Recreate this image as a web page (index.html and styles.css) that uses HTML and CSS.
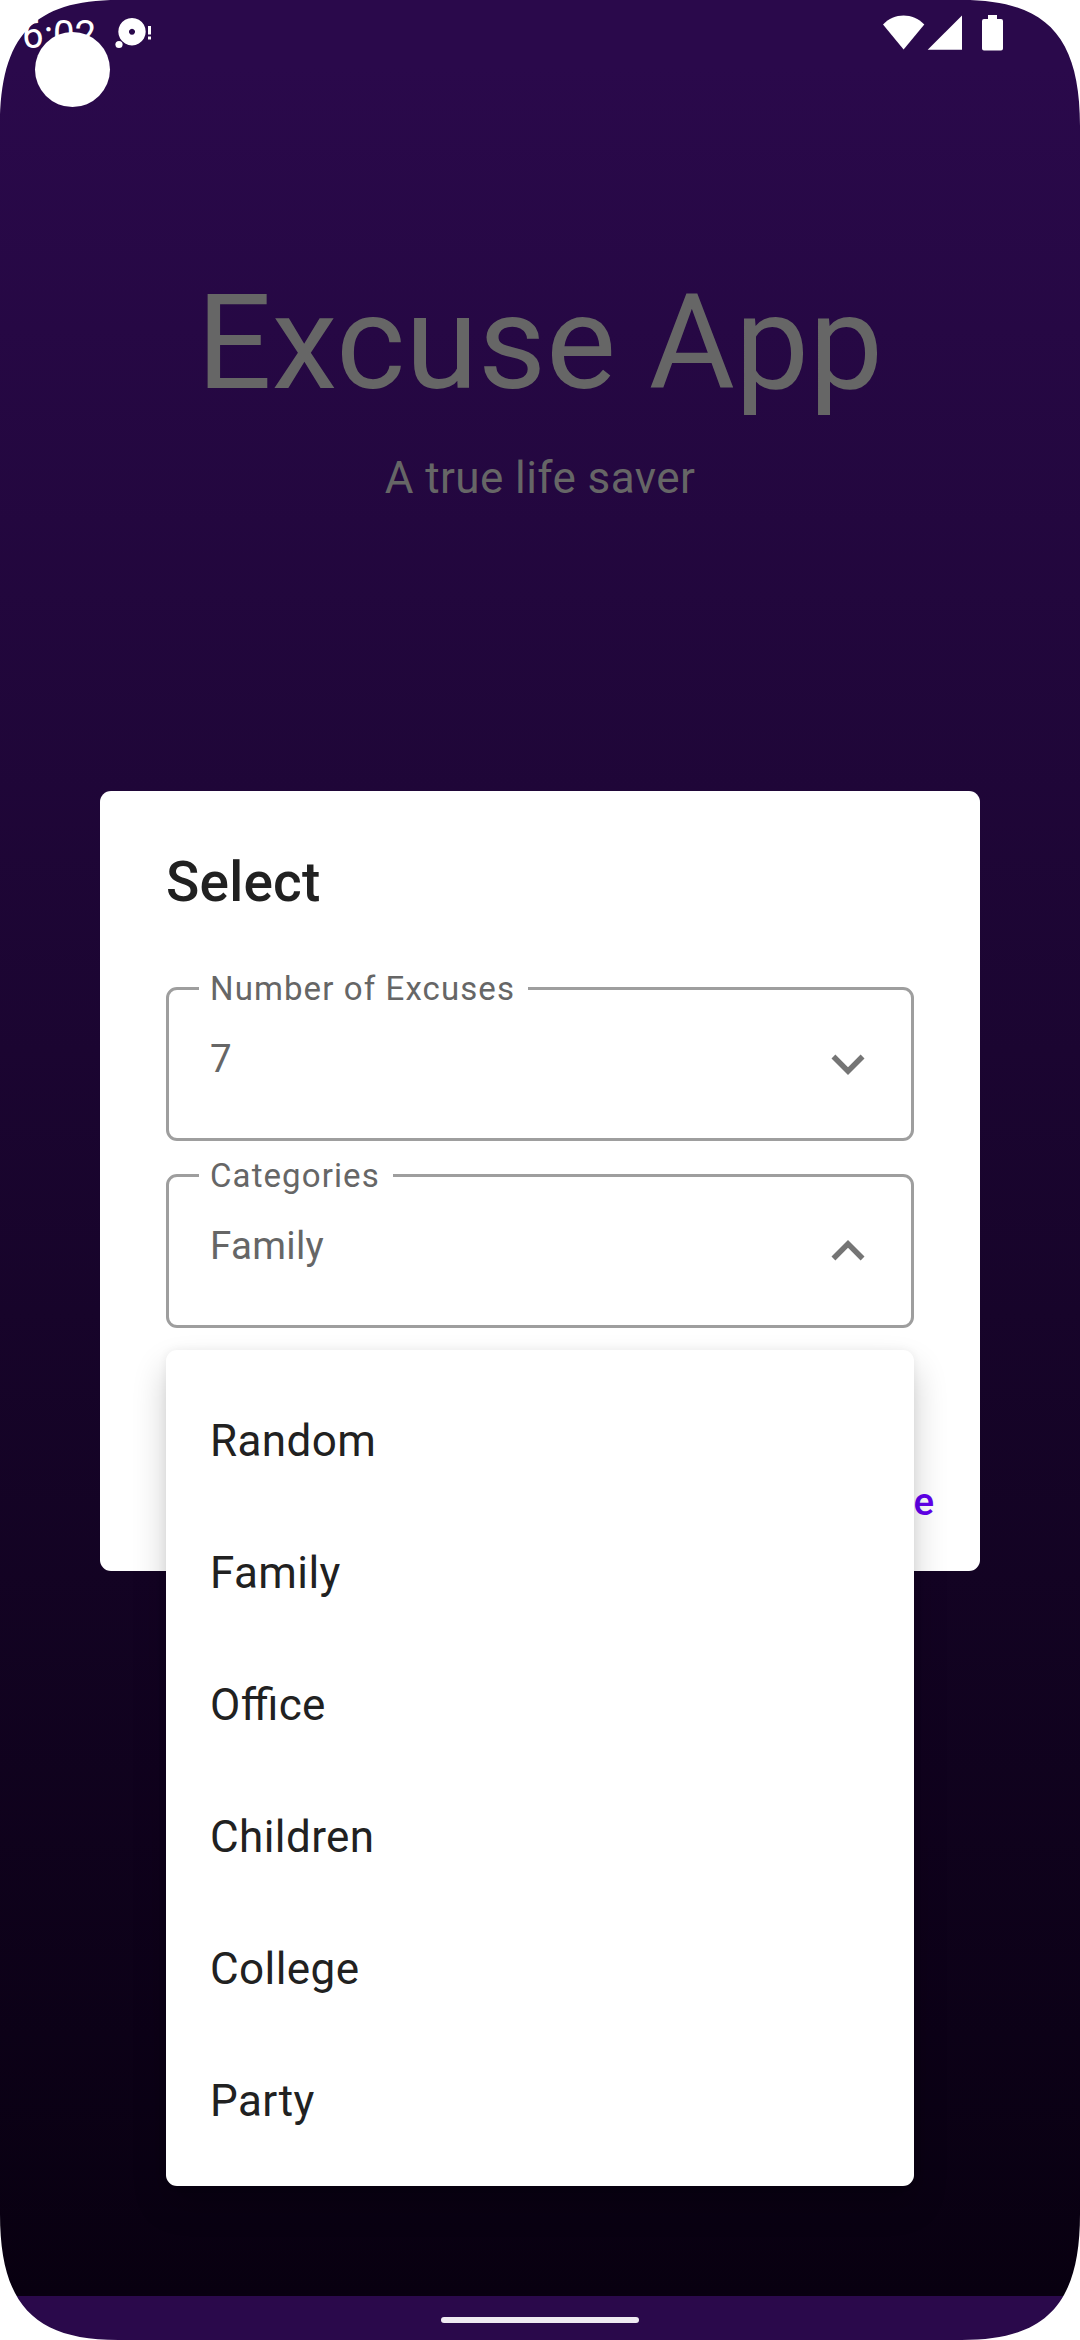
FILE: index.html
```html
<!DOCTYPE html>
<html lang="en">
<head>
<meta charset="utf-8">
<title>Excuse App</title>
<link rel="stylesheet" href="styles.css">
</head>
<body>
<div class="screen">
  <header class="status-bar">
    <span class="clock">6:02</span>
    <svg class="notice" width="38" height="34" viewBox="0 0 38 34">
      <path fill-rule="evenodd" d="M17 3a13.700 13.700 0 1 0 .01 0zM17 13.700a3 3 0 1 1-.01 0z"/>
      <circle cx="4" cy="29.500" r="3.600"/>
      <path d="M33 11h3v8.500h-3zM33 21.500h3v3h-3z"/>
    </svg>
    <svg class="signals" width="120" height="37" viewBox="0 0 120 37">
      <path d="M0 9.500C11-2.500 30-2.500 41.300 9.500L20.600 34.500z"/>
      <path d="M44.700 34.700 79 .500V34.700z"/>
      <path d="M105 0h9v4h4q2 0 2 2v27.500q0 2-2 2H101q-2 0-2-2V6q0-2 2-2h4z"/>
    </svg>
  </header>
  <main class="hero">
    <h1 class="app-title">Excuse App</h1>
    <p class="tagline">A true life saver</p>
  </main>
  <footer class="nav-bar"><span class="nav-handle"></span></footer>

  <section class="dialog">
    <h2 class="dialog-title">Select</h2>
    <fieldset class="field">
      <legend class="label">Number of Excuses</legend>
      <div class="value-row">
        <span class="value">7</span>
        <svg class="chevron" viewBox="0 0 24 24"><path d="M7.410 8.590 12 13.170l4.590-4.580L18 10l-6 6-6-6z"/></svg>
      </div>
    </fieldset>
    <fieldset class="field">
      <legend class="label">Categories</legend>
      <div class="value-row">
        <span class="value">Family</span>
        <svg class="chevron" viewBox="0 0 24 24"><path d="M12 8l-6 6 1.410 1.410L12 10.830l4.590 4.580L18 14z"/></svg>
      </div>
    </fieldset>
    <div class="actions"><span class="action">e</span></div>
  </section>

  <ul class="menu">
    <li class="menu-item">Random</li>
    <li class="menu-item">Family</li>
    <li class="menu-item">Office</li>
    <li class="menu-item">Children</li>
    <li class="menu-item">College</li>
    <li class="menu-item">Party</li>
  </ul>

  <span class="camera"></span>
  <svg class="corner top-left" viewBox="0 0 128 128"><path d="M0 0V126C0 36 34 0 118 0z"/></svg>
  <svg class="corner top-right" viewBox="0 0 128 128"><path d="M0 0V126C0 36 34 0 118 0z"/></svg>
  <svg class="corner bottom-left" viewBox="0 0 128 128"><path d="M0 0V126C0 36 34 0 118 0z"/></svg>
  <svg class="corner bottom-right" viewBox="0 0 128 128"><path d="M0 0V126C0 36 34 0 118 0z"/></svg>
</div>
</body>
</html>
```
FILE: styles.css
```css
* { box-sizing: border-box; }

body {
  margin: 0;
  font-family: Roboto, "Liberation Sans", sans-serif;
}

.screen {
  position: relative;
  display: flex;
  flex-direction: column;
  width: 1080px;
  height: 2340px;
  overflow: hidden;
  background: linear-gradient(#2a094b 66px, #080010 2296px);
}

.status-bar {
  display: flex;
  align-items: flex-start;
  height: 66px;
  padding: 15px 77px 0 22px;
  fill: #fff;
}

.clock {
  width: 93px;
  color: #fff;
  font-size: 38.500px;
  line-height: 40px;
}

.signals { margin-left: auto; }

.hero {
  flex: 1;
  padding-top: 199px;
  color: #666;
  text-align: center;
}

.app-title {
  margin: 0 0 24px;
  font-size: 132px;
  font-weight: 400;
  line-height: 156px;
}

.tagline {
  margin: 0;
  font-size: 44px;
  line-height: 66px;
  letter-spacing: 0.410px;
}

.nav-bar {
  display: flex;
  align-items: center;
  justify-content: center;
  height: 44px;
  padding-top: 4px;
  background: #2a094b;
}

.nav-handle {
  width: 198px;
  height: 6px;
  border-radius: 3px;
  background: #eeebf1;
}

.dialog {
  position: absolute;
  top: 791px;
  left: 100px;
  width: 880px;
  height: 780px;
  padding: 59px 66px 0;
  border-radius: 11px;
  background: #fff;
}

.dialog-title {
  margin: 0 0 54px;
  color: #212121;
  font-size: 55px;
  font-weight: 500;
  line-height: 64px;
  letter-spacing: 0.200px;
}

.field {
  height: 173px;
  margin: 0 0 14px;
  padding: 22px 30px 0;
  border: 3px solid #9e9e9e;
  border-radius: 11px;
  color: #666;
}

.label {
  padding: 0 13px 0 11px;
  font-size: 33px;
  line-height: 41px;
  letter-spacing: 1.100px;
}

.value-row {
  display: flex;
  justify-content: space-between;
  padding-left: 11px;
}

.value {
  font-size: 38.500px;
  line-height: 56px;
  letter-spacing: 0.300px;
}

.chevron {
  width: 66px;
  height: 66px;
  fill: #757575;
}

.actions {
  display: flex;
  justify-content: flex-end;
  margin-top: 146px;
  margin-right: -20px;
}

.action {
  color: #6200ee;
  font-size: 38.500px;
  font-weight: 500;
  line-height: 56px;
}

.menu {
  position: absolute;
  top: 1350px;
  left: 166px;
  width: 748px;
  margin: 0;
  padding: 22px 0;
  border-radius: 11px;
  background: #fff;
  box-shadow: 0 18px 34px rgba(0, 0, 0, 0.200), 0 0 10px rgba(0, 0, 0, 0.060);
  list-style: none;
}

.menu-item {
  height: 132px;
  padding: 0 44px;
  color: #212121;
  font-size: 44px;
  font-feature-settings: "liga" 1;
  line-height: 138px;
  letter-spacing: 0.410px;
}

.camera {
  position: absolute;
  top: 32px;
  left: 35px;
  width: 75px;
  height: 75px;
  border-radius: 50%;
  background: #fff;
}

.corner {
  position: absolute;
  width: 128px;
  height: 128px;
  fill: #fff;
}

.top-left { top: 0; left: 0; }
.top-right { top: 0; right: 0; transform: scaleX(-1); }
.bottom-left { bottom: 0; left: 0; transform: scaleY(-1); }
.bottom-right { right: 0; bottom: 0; transform: scale(-1); }
```
